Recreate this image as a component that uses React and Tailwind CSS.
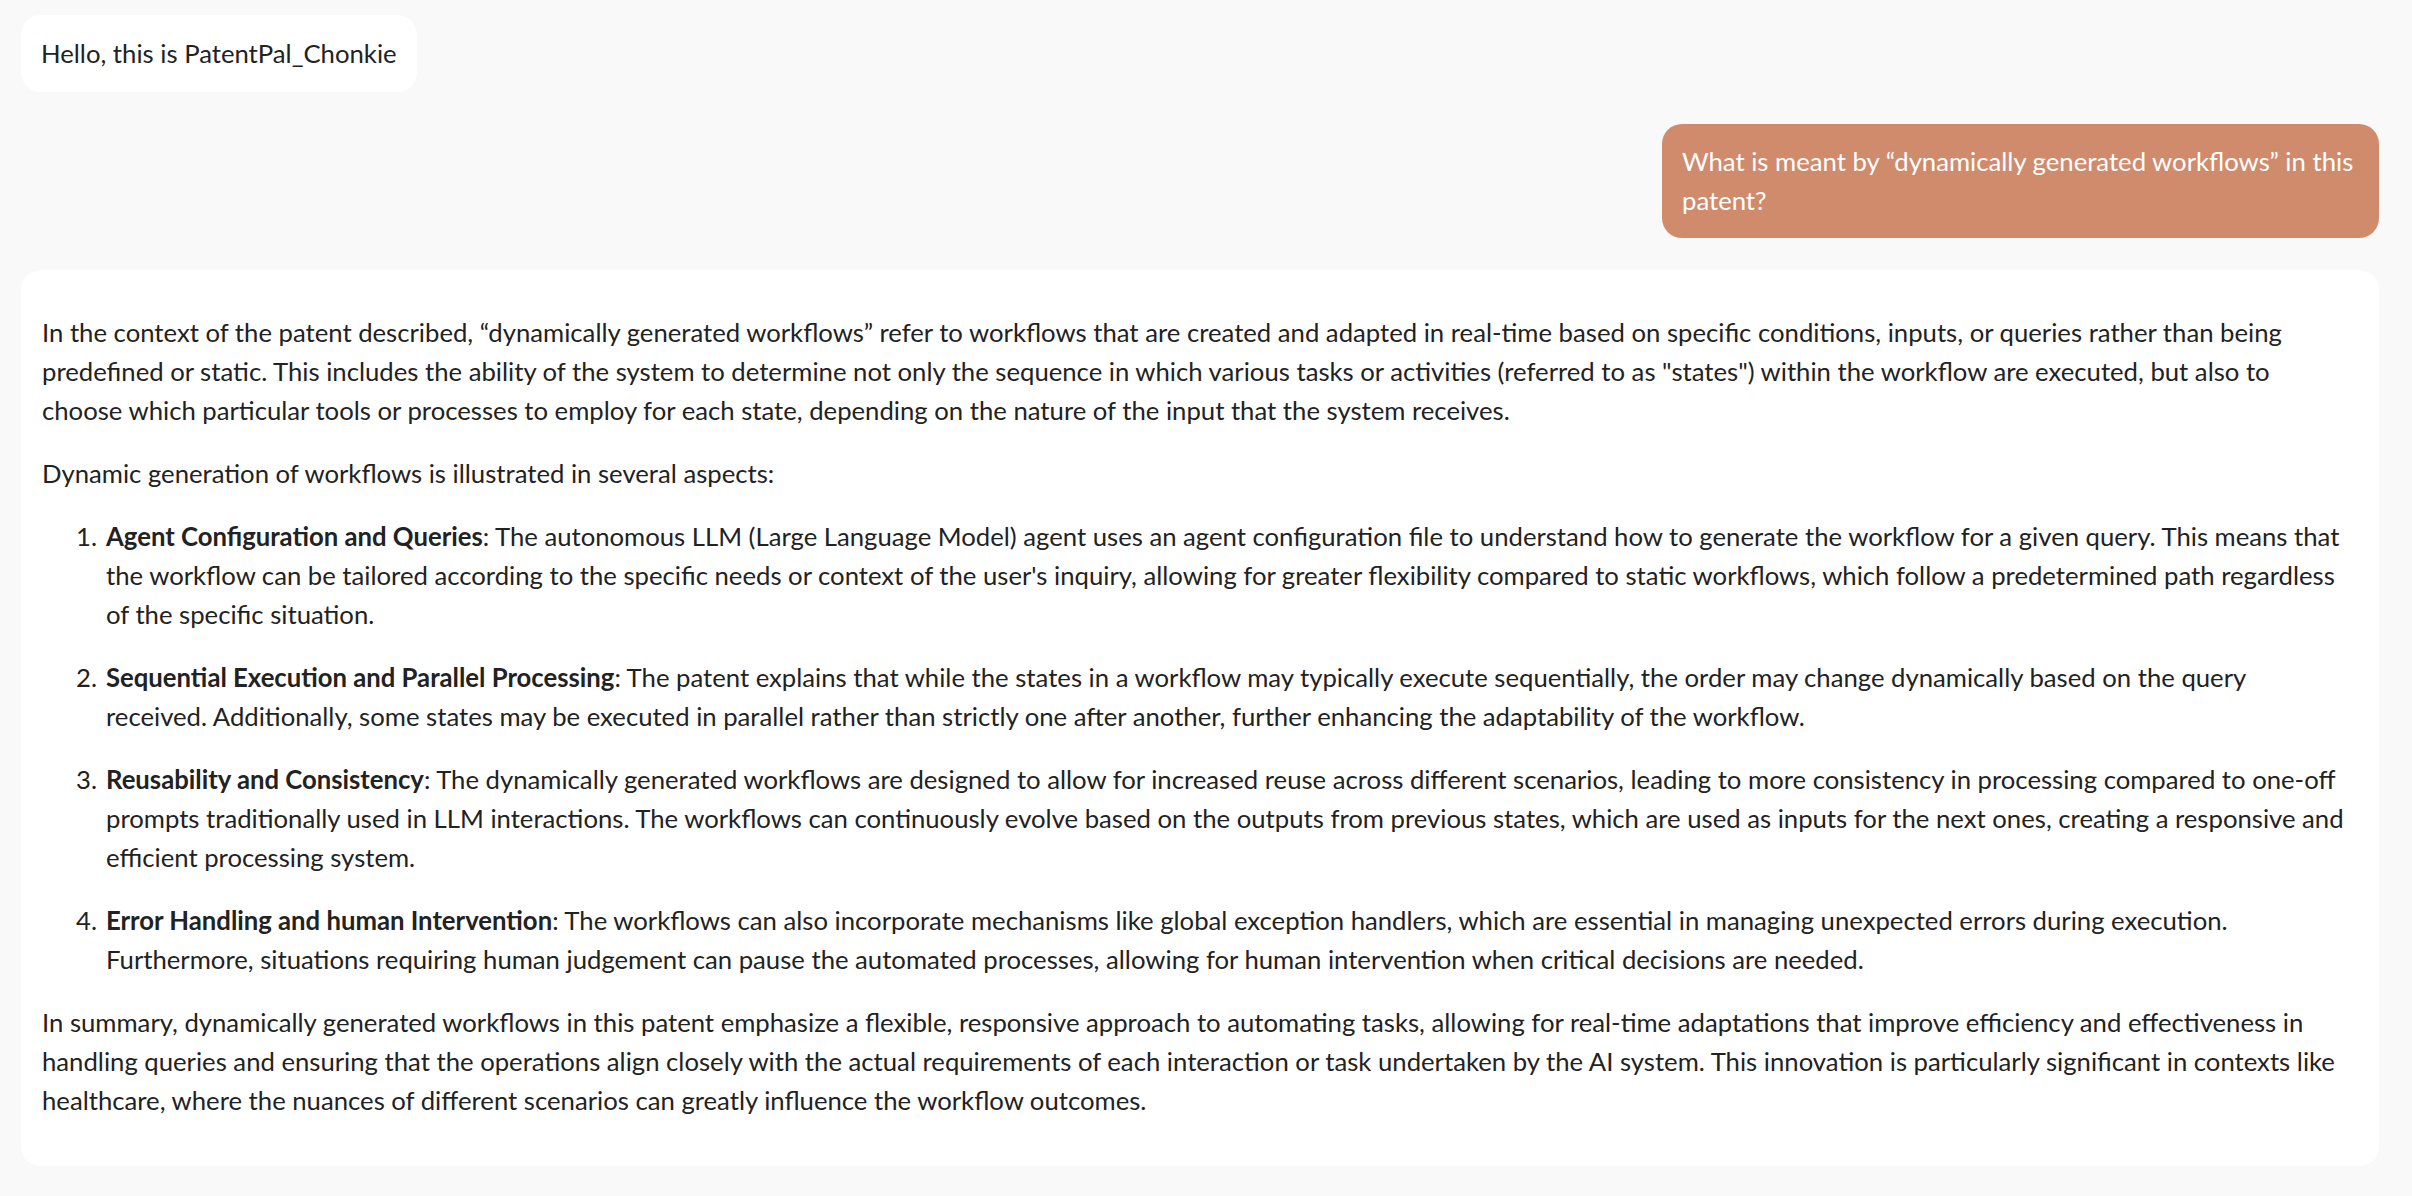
const answer = {
  intro:
    'In the context of the patent described, “dynamically generated workflows” refer to workflows that are created and adapted in real-time based on specific conditions, inputs, or queries rather than being predefined or static. This includes the ability of the system to determine not only the sequence in which various tasks or activities (referred to as "states") within the workflow are executed, but also to choose which particular tools or processes to employ for each state, depending on the nature of the input that the system receives.',
  lead: 'Dynamic generation of workflows is illustrated in several aspects:',
  points: [
    {
      title: 'Agent Configuration and Queries',
      body: "The autonomous LLM (Large Language Model) agent uses an agent configuration file to understand how to generate the workflow for a given query. This means that the workflow can be tailored according to the specific needs or context of the user's inquiry, allowing for greater flexibility compared to static workflows, which follow a predetermined path regardless of the specific situation.",
    },
    {
      title: 'Sequential Execution and Parallel Processing',
      body: 'The patent explains that while the states in a workflow may typically execute sequentially, the order may change dynamically based on the query received. Additionally, some states may be executed in parallel rather than strictly one after another, further enhancing the adaptability of the workflow.',
    },
    {
      title: 'Reusability and Consistency',
      body: 'The dynamically generated workflows are designed to allow for increased reuse across different scenarios, leading to more consistency in processing compared to one-off prompts traditionally used in LLM interactions. The workflows can continuously evolve based on the outputs from previous states, which are used as inputs for the next ones, creating a responsive and efficient processing system.',
    },
    {
      title: 'Error Handling and human Intervention',
      body: 'The workflows can also incorporate mechanisms like global exception handlers, which are essential in managing unexpected errors during execution. Furthermore, situations requiring human judgement can pause the automated processes, allowing for human intervention when critical decisions are needed.',
    },
  ],
  summary:
    'In summary, dynamically generated workflows in this patent emphasize a flexible, responsive approach to automating tasks, allowing for real-time adaptations that improve efficiency and effectiveness in handling queries and ensuring that the operations align closely with the actual requirements of each interaction or task undertaken by the AI system. This innovation is particularly significant in contexts like healthcare, where the nuances of different scenarios can greatly influence the workflow outcomes.',
}

export default function App() {
  return (
    <div
      className="min-h-screen bg-[#f9f9f9] pt-[15px] pl-[21px] pr-[33px] pb-8 text-[25.7px] leading-[39px] text-[#222222]"
      style={{ fontFamily: 'Lato, "Noto Sans", sans-serif' }}
    >
      <div className="flex flex-col gap-[32px]">
        <div className="self-start rounded-[20px] bg-white px-[20px] py-[19px]">
          Hello, this is PatentPal_Chonkie
        </div>

        <div className="self-end max-w-[717px] rounded-[20px] bg-[#d08b6c] pl-[20px] pr-[22px] py-[18px] text-white">
          What is meant by “dynamically generated workflows” in this patent?
        </div>

        <div className="rounded-[20px] bg-white pl-[21px] pr-[34px] pt-[43px] pb-[46px]">
          <div className="flex flex-col gap-[24px]">
            <p>{answer.intro}</p>
            <p>{answer.lead}</p>
            {answer.points.map((p, i) => (
              <div key={p.title} className="flex">
                <span className="w-[64px] shrink-0 pr-[9px] text-right">{i + 1}.</span>
                <p>
                  <strong className="font-bold">{p.title}</strong>: {p.body}
                </p>
              </div>
            ))}
            <p>{answer.summary}</p>
          </div>
        </div>
      </div>
    </div>
  )
}
